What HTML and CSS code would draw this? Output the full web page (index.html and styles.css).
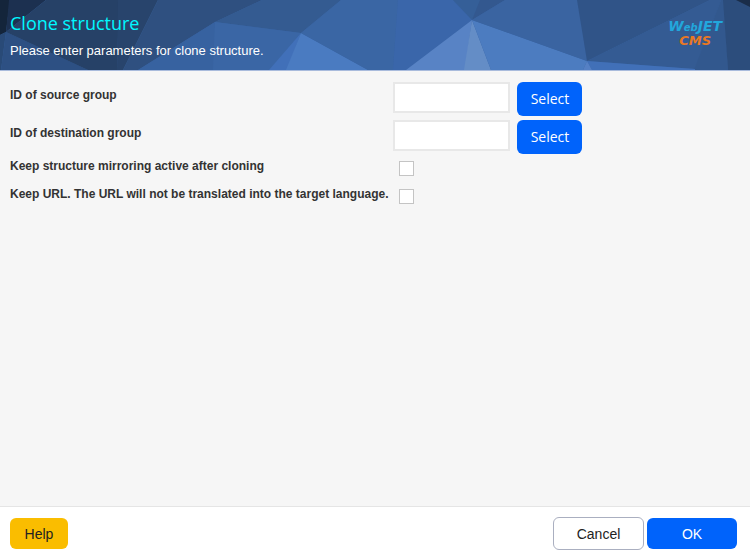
FILE: index.html
```html
<!DOCTYPE html>
<html lang="en">
<head>
<meta charset="utf-8">
<title>Clone structure</title>
<link rel="stylesheet" href="styles.css">
</head>
<body>
<header class="header">
  <svg class="header-art" viewBox="0 0 750 70" preserveAspectRatio="xMidYMid slice" aria-hidden="true">
    <rect width="750" height="70" fill="#3964a2"/>
    <path fill="#14253b" d="M0 0H10L6 32L0 35Z"/>
    <path fill="#1c3050" d="M9 0H46L6 32Z"/>
    <path fill="#294a77" d="M0 35L6 32L1 70H0Z"/>
    <path fill="#2d5083" d="M6 32L88 70H1Z"/>
    <path fill="#264167" d="M46 0H119L117 70H88L6 32Z"/>
    <path fill="#28446c" d="M118 0H158L123 70H117Z"/>
    <path fill="#2f5080" d="M158 0H262L215 22L138 70H123Z"/>
    <path fill="#345b91" d="M262 0H341L301 33L215 22Z"/>
    <path fill="#3762a0" d="M215 22L213 70H138Z"/>
    <path fill="#3a66a5" d="M215 22L301 33L270 70H213Z"/>
    <path fill="#4170b9" d="M301 33L287 70H269Z"/>
    <path fill="#4a7bc1" d="M301 33L368 70H286Z"/>
    <path fill="#3a66a4" d="M341 0H398L393 70H368L301 33Z"/>
    <path fill="#3a66aa" d="M398 0H453L472 20L406 70H393Z"/>
    <path fill="#355f98" d="M453 0H481L472 20Z"/>
    <path fill="#33588f" d="M480 0H505L472 20Z"/>
    <path fill="#5883c5" d="M472 20L465 70H406Z"/>
    <path fill="#648dc6" d="M472 20L491 70H464Z"/>
    <path fill="#4c7cc0" d="M472 20L587 61L583 70H491Z"/>
    <path fill="#3a64a1" d="M505 0H578L587 61L472 20Z"/>
    <path fill="#305488" d="M577 0H710L587 61Z"/>
    <path fill="#345b93" d="M710 0H721L695 69L587 61Z"/>
    <path fill="#32588e" d="M721 0H724L728 70H694Z"/>
    <path fill="#2c4d7c" d="M723 0H750V70H728Z"/>
    <path fill="#1a2d49" d="M736 0H750V7Z"/>
    <path fill="#4170b8" d="M587 61L695 69V70H592Z"/>
    <path fill="#5580c4" d="M587 61L592 70H583Z"/>
  </svg>
  <div class="heading">
    <h1>Clone structure</h1>
    <p>Please enter parameters for clone structure.</p>
  </div>
  <div class="logo"><span class="logo-top">W<small>eb</small>JET</span><span class="logo-bottom">CMS</span></div>
</header>
<form class="dialog">
  <main class="fields">
    <div class="row">
      <label for="source">ID of source group</label>
      <div class="control"><input class="text" id="source" type="text"><button class="select" type="button">Select</button></div>
    </div>
    <div class="row">
      <label for="destination">ID of destination group</label>
      <div class="control"><input class="text" id="destination" type="text"><button class="select" type="button">Select</button></div>
    </div>
    <div class="row check-row">
      <label for="mirroring">Keep structure mirroring active after cloning</label>
      <div class="control"><input class="check" id="mirroring" type="checkbox"></div>
    </div>
    <div class="row check-row">
      <label for="keep-url">Keep URL. The URL will not be translated into the target language.</label>
      <div class="control"><input class="check" id="keep-url" type="checkbox"></div>
    </div>
  </main>
  <footer class="footer">
    <button class="help" type="button">Help</button>
    <div class="actions">
      <button class="cancel" type="button">Cancel</button>
      <button class="ok" type="submit">OK</button>
    </div>
  </footer>
</form>
</body>
</html>
```
FILE: styles.css
```css
* { box-sizing: border-box; }

body {
  display: flex;
  flex-direction: column;
  min-height: 100vh;
  margin: 0;
  background: #f6f6f6;
  color: #333;
  font-family: "Liberation Sans", Arial, sans-serif;
}

.header {
  position: relative;
  display: flex;
  justify-content: space-between;
  padding: 10px 28px 10px 10px;
  border-bottom: 1px solid #a9bbdc;
}

.header-art {
  position: absolute;
  inset: 0;
  width: 100%;
  height: 100%;
}

.heading, .logo { position: relative; }

h1 {
  margin: 0;
  color: #00f8ff;
  font: 400 18px/26px "Open Sans", "Noto Sans", sans-serif;
}

.heading p {
  margin: 6px 0 0;
  color: #fff;
  font-size: 13px;
  line-height: 18px;
}

.logo {
  display: flex;
  flex-direction: column;
  align-items: center;
  padding-top: 10px;
  font: italic 700 14px/13px "DejaVu Sans", sans-serif;
}

.logo-top { color: #22a7dc; }
.logo-top small { font-size: 10px; }
.logo-bottom { color: #e97824; font-size: 13px; }

.dialog {
  display: flex;
  flex: 1;
  flex-direction: column;
}

.fields {
  display: grid;
  grid-template-columns: max-content 1fr;
  align-content: start;
  column-gap: 5px;
  row-gap: 4px;
  flex: 1;
  padding: 11px 10px;
}

.row { display: contents; }

.row label {
  padding-top: 5px;
  font-size: 12px;
  font-weight: 700;
  line-height: 16px;
}

.control {
  display: flex;
  align-items: flex-start;
  gap: 7px;
  min-height: 34px;
}

.check-row .control { min-height: 24px; padding: 3px 0 0 6px; }
.check-row label { padding-top: 0; }

.text {
  width: 117px;
  height: 31px;
  padding: 4px;
  border: 2px solid #e8e8e8;
  background: #fff;
}

.check {
  width: 15px;
  height: 15px;
  margin: 0;
  border: 1px solid #c4c4c4;
  background: #fff;
  appearance: none;
}

button {
  padding: 0;
  border: 1px solid transparent;
  border-radius: 6px;
  font: 14px/20px "Liberation Sans", Arial, sans-serif;
}

.select {
  width: 65px;
  height: 34px;
  background: #0063fb;
  color: #fff;
  font-family: "Open Sans", "Noto Sans", sans-serif;
}

.footer {
  display: flex;
  align-items: center;
  justify-content: space-between;
  padding: 10px 13px 10px 10px;
  border-top: 1px solid #e5e5e5;
  background: #fff;
}

.actions {
  display: flex;
  align-items: center;
  gap: 3px;
}

.help {
  width: 58px;
  height: 31px;
  background: #fabd00;
  color: #222;
}

.cancel {
  width: 91px;
  height: 33px;
  border-color: #aaafc0;
  background: #fff;
  color: #222;
}

.ok {
  width: 90px;
  height: 31px;
  background: #0063fb;
  color: #fff;
}
```
